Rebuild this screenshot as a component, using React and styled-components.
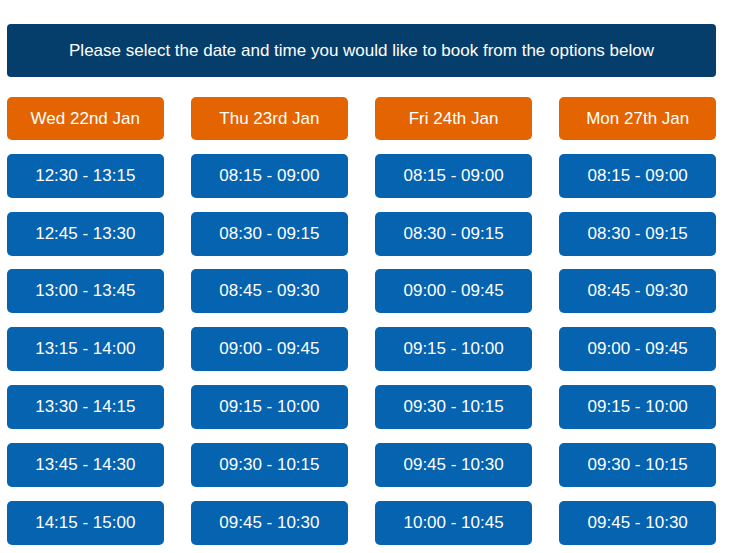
import React from "react";
import styled, { createGlobalStyle } from "styled-components";

const Global = createGlobalStyle`
  html, body { margin: 0; padding: 0; background: #ffffff; }
  body { font-family: "Liberation Sans", Arial, sans-serif; }
`;

const Page = styled.div`
  padding: 24px 17px 0 7px;
  width: 709px;
`;

const Banner = styled.div`
  height: 53px;
  background: #053e6b;
  border-radius: 4px;
  color: #ffffff;
  font-size: 17px;
  display: flex;
  align-items: center;
  justify-content: center;
  margin-bottom: 20px;
`;

const Grid = styled.div`
  display: grid;
  grid-template-columns: repeat(4, 1fr);
  column-gap: 27.6px;
`;

const Column = styled.div`
  display: flex;
  flex-direction: column;
  gap: 13.8px;
`;

const Slot = styled.button`
  height: ${(p) => (p.$head ? "43px" : "44px")};
  border: none;
  border-radius: 5px;
  background: ${(p) => (p.$head ? "#e36400" : "#0563b0")};
  color: #ffffff;
  font-family: "Liberation Sans", Arial, sans-serif;
  font-size: 17px;
  padding: 0;
  cursor: pointer;
  display: flex;
  align-items: center;
  justify-content: center;
`;

const data = [
  { day: "Wed 22nd Jan", times: ["12:30 - 13:15", "12:45 - 13:30", "13:00 - 13:45", "13:15 - 14:00", "13:30 - 14:15", "13:45 - 14:30", "14:15 - 15:00"] },
  { day: "Thu 23rd Jan", times: ["08:15 - 09:00", "08:30 - 09:15", "08:45 - 09:30", "09:00 - 09:45", "09:15 - 10:00", "09:30 - 10:15", "09:45 - 10:30"] },
  { day: "Fri 24th Jan", times: ["08:15 - 09:00", "08:30 - 09:15", "09:00 - 09:45", "09:15 - 10:00", "09:30 - 10:15", "09:45 - 10:30", "10:00 - 10:45"] },
  { day: "Mon 27th Jan", times: ["08:15 - 09:00", "08:30 - 09:15", "08:45 - 09:30", "09:00 - 09:45", "09:15 - 10:00", "09:30 - 10:15", "09:45 - 10:30"] },
];

export default function App() {
  return (
    <>
      <Global />
      <Page>
        <Banner>Please select the date and time you would like to book from the options below</Banner>
        <Grid>
          {data.map((col) => (
            <Column key={col.day}>
              <Slot $head>{col.day}</Slot>
              {col.times.map((t) => (
                <Slot key={t}>{t}</Slot>
              ))}
            </Column>
          ))}
        </Grid>
      </Page>
    </>
  );
}
